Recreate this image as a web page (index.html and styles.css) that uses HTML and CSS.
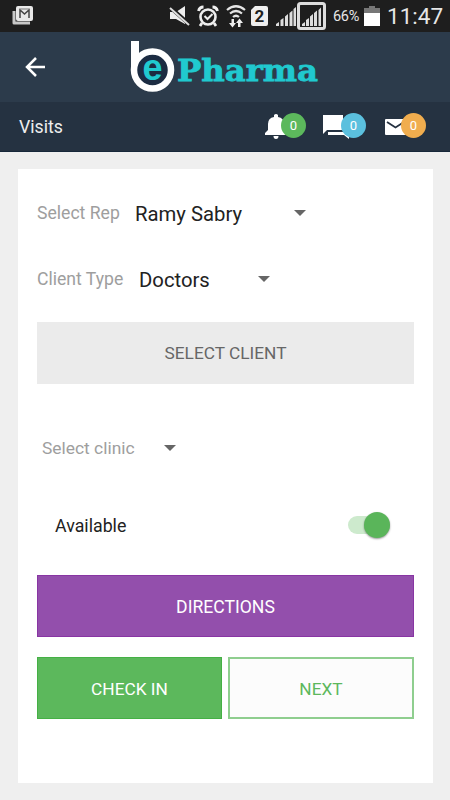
FILE: index.html
```html
<!DOCTYPE html>
<html lang="en">

<head>
    <meta charset="utf-8">
    <meta name="viewport" content="width=device-width, initial-scale=1">
    <title>Visits</title>
    <link rel="stylesheet" href="styles.css">
</head>

<body>
    <div class="status">
        <svg class="mail" width="22" height="20" viewBox="0 0 22 20">
            <path d="M2 5v12h16" fill="none" stroke="#c8c8c8" stroke-width="3" stroke-linejoin="round" />
            <rect x="4" y="0" width="17" height="15" rx="2" fill="#e8e8e8" />
            <path d="M8 12V4l4.500 4L17 4v8" fill="none" stroke="#444" stroke-width="1.500" />
            <path d="M8 3h9" stroke="#777" />
        </svg>
        <svg class="mute" width="22" height="22" viewBox="0 0 22 22">
            <path d="M1 7h6l9-6v18l-9-5H1z" fill="#eee" />
            <path d="M2 3l18 16" stroke="#1e1e1e" stroke-width="4" />
            <path d="M1 3l19 17" stroke="#ddd" stroke-width="2" />
        </svg>
        <svg class="alarm" width="22" height="22" viewBox="0 0 22 22">
            <circle cx="11" cy="12" r="7.500" fill="none" stroke="#eee" stroke-width="2.600" />
            <path d="M1.500 6q1-4 5-4M20.500 6q-1-4-5-4M5 18l-2 3M17 18l2 3" fill="none" stroke="#eee" stroke-width="2.800" />
            <path d="M7.500 11l3 3 5-5" fill="none" stroke="#eee" stroke-width="2" />
        </svg>
        <svg class="wifi" width="20" height="23" viewBox="0 0 20 23">
            <g fill="none" stroke="#e5e5e5" stroke-width="2.200">
                <path d="M1 5q9-7.500 18 0" />
                <path d="M4 8.500q6-5 12 0" />
                <path d="M7 12q3-2.500 6 0" />
            </g>
            <path d="M5.500 14h2.500v4h2L6.500 22.500l-3.500-4.500h2.500zM12 22h2.500v-4H17L13.500 13.500 10 18h2z" fill="#eee" />
        </svg>
        <svg class="sim" width="17" height="20" viewBox="0 0 17 20">
            <path d="M4 0h11q2 0 2 2v16q0 2-2 2H2q-2 0-2-2V4z" fill="#eee" />
            <text x="8.500" y="16" text-anchor="middle">2</text>
        </svg>
        <svg class="signal" width="51" height="28" viewBox="0 0 51 28">
            <path d="M0 24v-2l3-2v4zM4.500 24v-6l3-2v8zM9 24V14.500l3-2.500v12zM13.500 24V11l3-2.500V24zM17.500 24V7l2.500-2v19z" fill="#ddd" />
            <rect x="22.500" y="1.500" width="26" height="25" rx="2" fill="none" stroke="#ddd" stroke-width="3" />
            <path d="M26 24v-2l3-2v4zM30 24v-6l3-2v8zM34 24V14.500l3-2.500v12zM38 24V11l3-2.500V24zM42.500 24V8L45 5.500V24z" fill="#ddd" />
        </svg>
        <span class="percent">66%</span>
        <svg class="battery" width="16" height="20" viewBox="0 0 16 20">
            <path d="M5 0h6v2h5v5H0V2h5z" fill="#777" />
            <path d="M0 7h16v13H0z" fill="#fff" />
        </svg>
        <span class="clock">11:47</span>
    </div>

    <div class="header">
        <svg class="back" width="22" height="22" viewBox="0 0 22 22">
            <path d="M20 11H3M11 2l-9 9 9 9" fill="none" stroke="#fff" stroke-width="2.500" />
        </svg>
        <svg class="logo" width="192" height="54" viewBox="0 0 192 54">
            <circle cx="22.500" cy="30" r="18.500" fill="#1c2c42" stroke="#fff" stroke-width="6.500" />
            <path d="M1 1h8v19l-8 9z" fill="#fff" />
            <text class="logo-e" x="22.500" y="39.500" text-anchor="middle">e</text>
            <text class="logo-name" x="47" y="41" textLength="141" lengthAdjust="spacingAndGlyphs">Pharma</text>
        </svg>
    </div>

    <div class="subbar">
        <span class="title">Visits</span>
        <div class="notice bell">
            <svg width="22" height="26" viewBox="0 0 22 26">
                <path d="M0 21v-2l3-3V10q0-6 6-7V1q2-2 4 0v2q6 1 6 7v6l3 3v2zM8.500 22h5q0 3-2.500 3t-2.500-3z" fill="#fff" />
            </svg>
            <span class="badge green">0</span>
        </div>
        <div class="notice chat">
            <svg width="27" height="26" viewBox="0 0 27 26">
                <path d="M0 1h20v15H4l-4 4zM22 6h4v19l-5-4H5v-3h17z" fill="#fff" />
            </svg>
            <span class="badge blue">0</span>
        </div>
        <div class="notice envelope">
            <svg width="21" height="16" viewBox="0 0 21 16">
                <rect width="21" height="16" rx="1" fill="#fff" />
                <path d="M2 3l8.500 5.500L19 3" fill="none" stroke="#253241" stroke-width="1.800" />
            </svg>
            <span class="badge orange">0</span>
        </div>
    </div>

    <div class="card">
        <div class="row rep">
            <label>Select Rep</label>
            <span class="value">Ramy Sabry</span>
            <span class="arrow"></span>
        </div>
        <div class="row type">
            <label>Client Type</label>
            <span class="value">Doctors</span>
            <span class="arrow"></span>
        </div>
        <button class="btn client">SELECT CLIENT</button>
        <div class="row clinic">
            <label>Select clinic</label>
            <span class="arrow"></span>
        </div>
        <div class="row available">
            <span class="name">Available</span>
            <span class="switch"><span class="knob"></span></span>
        </div>
        <button class="btn directions">DIRECTIONS</button>
        <div class="actions">
            <button class="btn checkin">CHECK IN</button>
            <button class="btn next">NEXT</button>
        </div>
    </div>
</body>

</html>
```
FILE: styles.css
```css
* {
    box-sizing: border-box;
}

body {
    margin: 0;
    height: 800px;
    background-color: #efefef;
    font-family: Roboto, "Liberation Sans", sans-serif;
    overflow: hidden;
}

svg {
    display: block;
    flex: none;
}

.status {
    display: flex;
    align-items: center;
    height: 32px;
    padding-left: 12px;
    background-color: #1e1e1e;
    color: #e6e6e6;
}

.mute {
    margin-left: 135px;
}

.alarm {
    margin-left: 6px;
}

.wifi {
    margin-left: 7px;
}

.sim {
    margin-left: 5px;
}

.sim text {
    font-size: 17px;
    font-weight: bold;
    fill: #1e1e1e;
}

.signal {
    margin-left: 8px;
}

.percent {
    width: 31px;
    margin-left: 6px;
    font-size: 14.5px;
    letter-spacing: -0.3px;
}

.clock {
    margin-left: 7px;
    font-size: 22.5px;
}

.header {
    display: flex;
    align-items: center;
    height: 70px;
    padding-left: 25px;
    background-color: #2c3b4b;
}

.logo {
    margin-left: 83px;
}

.logo-e {
    font-family: "Liberation Sans", sans-serif;
    font-size: 36px;
    font-weight: bold;
    fill: #20c9cf;
}

.logo-name {
    font-family: "DejaVu Serif", serif;
    font-size: 30px;
    font-weight: bold;
    fill: #20c9cf;
    stroke: #20c9cf;
    stroke-width: 0.8px;
}

.subbar {
    display: flex;
    align-items: center;
    height: 50px;
    padding-left: 19px;
    background-color: #253241;
    border-bottom: 1px solid #17283a;
}

.title {
    width: 246px;
    padding-top: 1px;
    font-size: 17.7px;
    color: #eee;
}

.notice {
    position: relative;
    width: 58px;
}

.envelope {
    margin-left: 4px;
}

.badge {
    position: absolute;
    top: 50%;
    left: 16px;
    width: 25px;
    height: 25px;
    margin-top: -14px;
    border-radius: 50%;
    color: #fff;
    font-size: 13px;
    line-height: 25px;
    text-align: center;
}

.bell .badge {
    margin-top: -14px;
}

.green {
    background-color: #5cb85c;
}

.blue {
    left: 18px;
    background-color: #5bc0de;
}

.orange {
    background-color: #f0ad4e;
}

.card {
    width: 415px;
    height: 614px;
    margin: 17px 0 0 18px;
    padding: 20px 19px;
    background-color: #fff;
}

.row {
    display: flex;
    align-items: center;
    height: 48px;
}

.row label {
    font-size: 17.6px;
    color: #9e9e9e;
}

.value {
    padding-top: 1px;
    font-size: 20.3px;
    color: #222;
}

.arrow {
    border: 6px solid transparent;
    border-top: 6px solid #666;
    border-bottom: 0;
}

.rep label {
    width: 98px;
}

.rep .value {
    width: 159px;
}

.type {
    margin-top: 18px;
}

.type label {
    width: 102px;
}

.type .value {
    width: 119px;
}

.btn {
    display: block;
    width: 100%;
    height: 62px;
    padding: 0;
    border: none;
    font-family: inherit;
    font-size: 17.6px;
    color: #fff;
}

.client {
    margin-top: 19px;
    background-color: #ebebeb;
    color: #666;
    font-size: 17.3px;
}

.clinic {
    margin-top: 40px;
    padding-left: 5px;
}

.clinic label {
    width: 122px;
    font-size: 17.4px;
}

.available {
    justify-content: space-between;
    margin-top: 29px;
    padding: 0 24px 0 18px;
}

.name {
    font-size: 17.8px;
    color: #222;
}

.switch {
    display: flex;
    align-items: center;
    justify-content: flex-end;
    width: 42px;
    height: 18px;
    border-radius: 9px;
    background-color: #cdeacd;
}

.knob {
    flex: none;
    width: 26px;
    height: 26px;
    border-radius: 50%;
    background-color: #5ab55a;
    box-shadow: 0 1px 2px rgba(0, 0, 0, 0.4);
}

.directions {
    margin-top: 26px;
    padding-top: 2px;
    border: 1px solid #8835a3;
    background-color: #934fac;
}

.actions {
    display: flex;
    gap: 6px;
    margin-top: 20px;
}

.actions .btn {
    padding-top: 2px;
    font-size: 17.3px;
}

.checkin {
    border: 1px solid #45b045;
    background-color: #5cb85c;
}

.next {
    border: 2px solid #8fce8f;
    background-color: #fcfcfc;
    color: #5cb85c;
}
```
